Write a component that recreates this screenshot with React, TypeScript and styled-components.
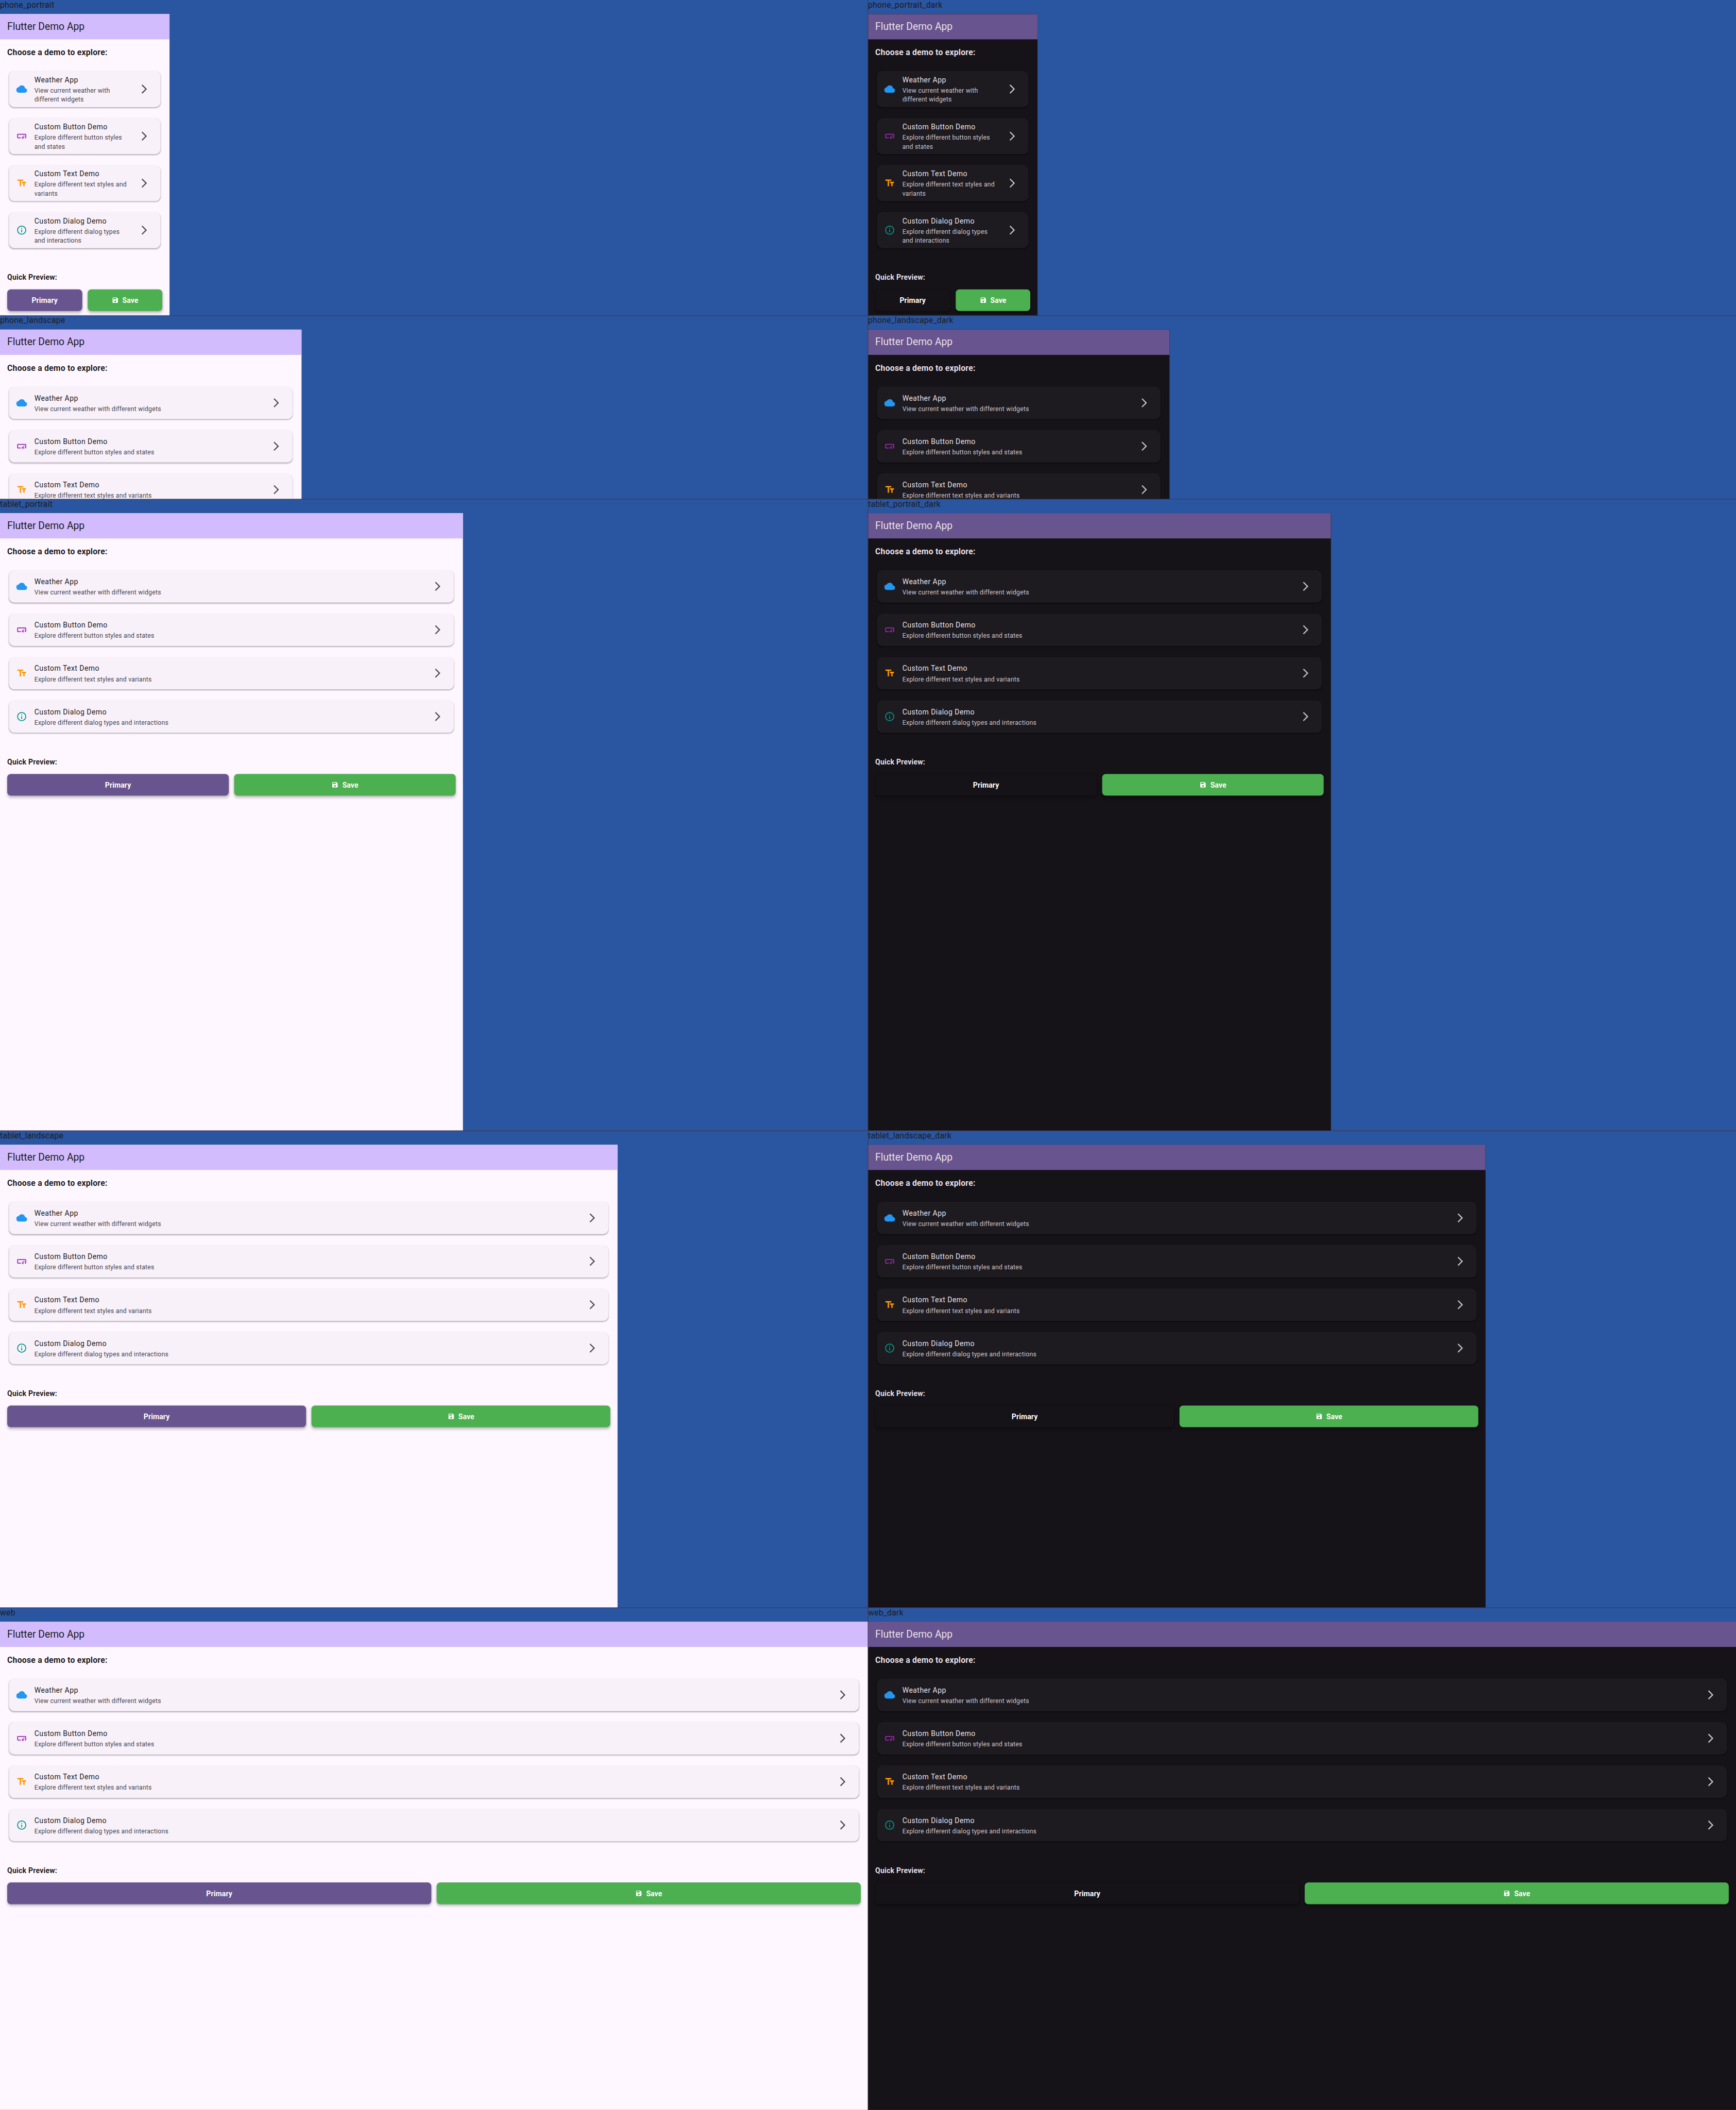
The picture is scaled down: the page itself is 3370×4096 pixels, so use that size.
import React from 'react';
import styled, { createGlobalStyle, ThemeProvider } from 'styled-components';
import { MdCloud, MdSmartButton, MdTextFields, MdInfoOutline, MdArrowForwardIos, MdSave } from 'react-icons/md';

interface Palette {
  bar: string; surface: string; card: string; text: string; muted: string; primary: string;
}

const light: Palette = {
  bar: '#d2bcfd', surface: '#fef7ff', card: '#f8f1fa', text: '#1d1b20', muted: '#49454e', primary: '#68548e',
};
const dark: Palette = {
  bar: '#68548e', surface: '#151218', card: '#1d1b20', text: '#e7e0e8', muted: '#cbc4cf', primary: '#151218',
};

const GlobalStyle = createGlobalStyle`
  html, body { margin: 0; background: #2a55a0; }
  body { font-family: Roboto, "Liberation Sans", sans-serif; overflow: hidden; }
  * { box-sizing: border-box; }
`;

const Viewport = styled.div`
  width: 3370px;
  height: 4096px;
  overflow: hidden;
`;

const Board = styled.main`
  display: grid;
  grid-template-columns: 1920px 1920px;
  align-content: start;
  width: 3840px;
  height: 4668px;
  background: #2a55a0;
  transform: scale(${3370 / 3840});
  transform-origin: 0 0;
`;

const Cell = styled.section<{ $last: boolean; $right: boolean }>`
  position: relative;
  display: flex;
  flex-direction: column;
  &::after {
    content: '';
    position: absolute;
    inset: 0 0 -1px -1px;
    z-index: 1;
    pointer-events: none;
    border: 0 solid rgba(66, 52, 68, 0.55);
    border-bottom-width: ${p => (p.$last ? 0 : '2px')};
    border-left-width: ${p => (p.$right ? '2px' : 0)};
  }
`;

const Label = styled.div`
  height: 31px;
  font-size: 18px;
  line-height: 22px;
  letter-spacing: 0.25px;
  color: #1d1b20;
  white-space: nowrap;
`;

const Screen = styled.div<{ $w: number; $h: number }>`
  width: ${p => p.$w}px;
  height: ${p => p.$h}px;
  overflow: hidden;
  background: ${p => p.theme.surface};
  color: ${p => p.theme.text};
`;

const AppBar = styled.header`
  height: 56px;
  padding: 0 16px;
  background: ${p => p.theme.bar};
  font-size: 22px;
  line-height: 55.5px;
`;

const Body = styled.div`
  padding: 16px;
`;

const Heading = styled.h1`
  margin: 0 0 28px;
  font-size: 18px;
  line-height: 26px;
  letter-spacing: 0.25px;
  font-weight: 700;
`;

const CardList = styled.div`
  display: flex;
  flex-direction: column;
  gap: 24px;
  padding: 0 4px;
`;

const Card = styled.article`
  display: flex;
  align-items: center;
  gap: 16px;
  min-height: 72px;
  padding: 8px 24px 8px 16px;
  border-radius: 12px;
  background: ${p => p.theme.card};
  box-shadow: 0 2px 3px -0.5px rgba(0, 0, 0, 0.24), 0 1px 1px rgba(0, 0, 0, 0.1);
`;

const CardIcon = styled.span<{ $color: string }>`
  display: flex;
  flex: none;
  color: ${p => p.$color};
  svg { width: 24px; height: 24px; }
`;

const CardText = styled.div`
  flex: 1;
  min-width: 0;
`;

const CardTitle = styled.div`
  font-size: 16px;
  line-height: 24px;
  letter-spacing: 0.5px;
`;

const CardSubtitle = styled.div`
  margin: 0.5px 0 -0.5px;
  font-size: 14px;
  line-height: 20px;
  letter-spacing: 0.25px;
  color: ${p => p.theme.muted};
`;

const Chevron = styled(MdArrowForwardIos)`
  flex: none;
  width: 24px;
  height: 24px;
  color: ${p => p.theme.muted};
`;

const PreviewTitle = styled.h2`
  margin: 52.5px 0 15.5px;
  font-size: 16px;
  line-height: 23px;
  letter-spacing: 0.25px;
  font-weight: 700;
`;

const Buttons = styled.div`
  display: flex;
  gap: 12px;
`;

const Button = styled.button<{ $save?: boolean }>`
  display: flex;
  flex: 1;
  align-items: center;
  justify-content: center;
  gap: 8px;
  height: 48px;
  padding: 0;
  border: 0;
  border-radius: 8px;
  background: ${p => (p.$save ? '#4caf50' : p.theme.primary)};
  color: #fff;
  font-family: inherit;
  font-size: 16px;
  font-weight: 700;
  letter-spacing: 0.1px;
  box-shadow: 0 4px 6px rgba(0, 0, 0, 0.2), 0 1px 4px rgba(0, 0, 0, 0.1);
  svg { width: 16px; height: 16px; }
`;

const demos = [
  { icon: <MdCloud />, color: '#2196f3', title: 'Weather App', text: 'View current weather with different widgets' },
  { icon: <MdSmartButton />, color: '#9c27b0', title: 'Custom Button Demo', text: 'Explore different button styles and states' },
  { icon: <MdTextFields />, color: '#ff9800', title: 'Custom Text Demo', text: 'Explore different text styles and variants' },
  { icon: <MdInfoOutline />, color: '#009688', title: 'Custom Dialog Demo', text: 'Explore different dialog types and interactions' },
];

const devices = [
  { name: 'phone_portrait', w: 375, h: 667, shown: 4 },
  { name: 'phone_landscape', w: 667, h: 375, shown: 3 },
  { name: 'tablet_portrait', w: 1024, h: 1366, shown: 4 },
  { name: 'tablet_landscape', w: 1366, h: 1024, shown: 4 },
  { name: 'web', w: 1920, h: 1080, shown: 4 },
];

function DemoHome({ w, h, shown }: { w: number; h: number; shown: number }) {
  return (
    <Screen $w={w} $h={h}>
      <AppBar>Flutter Demo App</AppBar>
      <Body>
        <Heading>Choose a demo to explore:</Heading>
        <CardList>
          {demos.slice(0, shown).map(d => (
            <Card key={d.title}>
              <CardIcon $color={d.color}>{d.icon}</CardIcon>
              <CardText>
                <CardTitle>{d.title}</CardTitle>
                <CardSubtitle>{d.text}</CardSubtitle>
              </CardText>
              <Chevron />
            </Card>
          ))}
        </CardList>
        {shown === demos.length && (
          <>
            <PreviewTitle>Quick Preview:</PreviewTitle>
            <Buttons>
              <Button>Primary</Button>
              <Button $save><MdSave />Save</Button>
            </Buttons>
          </>
        )}
      </Body>
    </Screen>
  );
}

export default function App() {
  return (
    <Viewport>
      <GlobalStyle />
      <Board>
        {devices.map((d, i) =>
          [light, dark].map((theme, j) => (
            <ThemeProvider theme={theme} key={d.name + j}>
              <Cell $last={i === devices.length - 1} $right={j === 1}>
                <Label>{d.name + (j ? '_dark' : '')}</Label>
                <DemoHome w={d.w} h={d.h} shown={d.shown} />
              </Cell>
            </ThemeProvider>
          )),
        )}
      </Board>
    </Viewport>
  );
}
